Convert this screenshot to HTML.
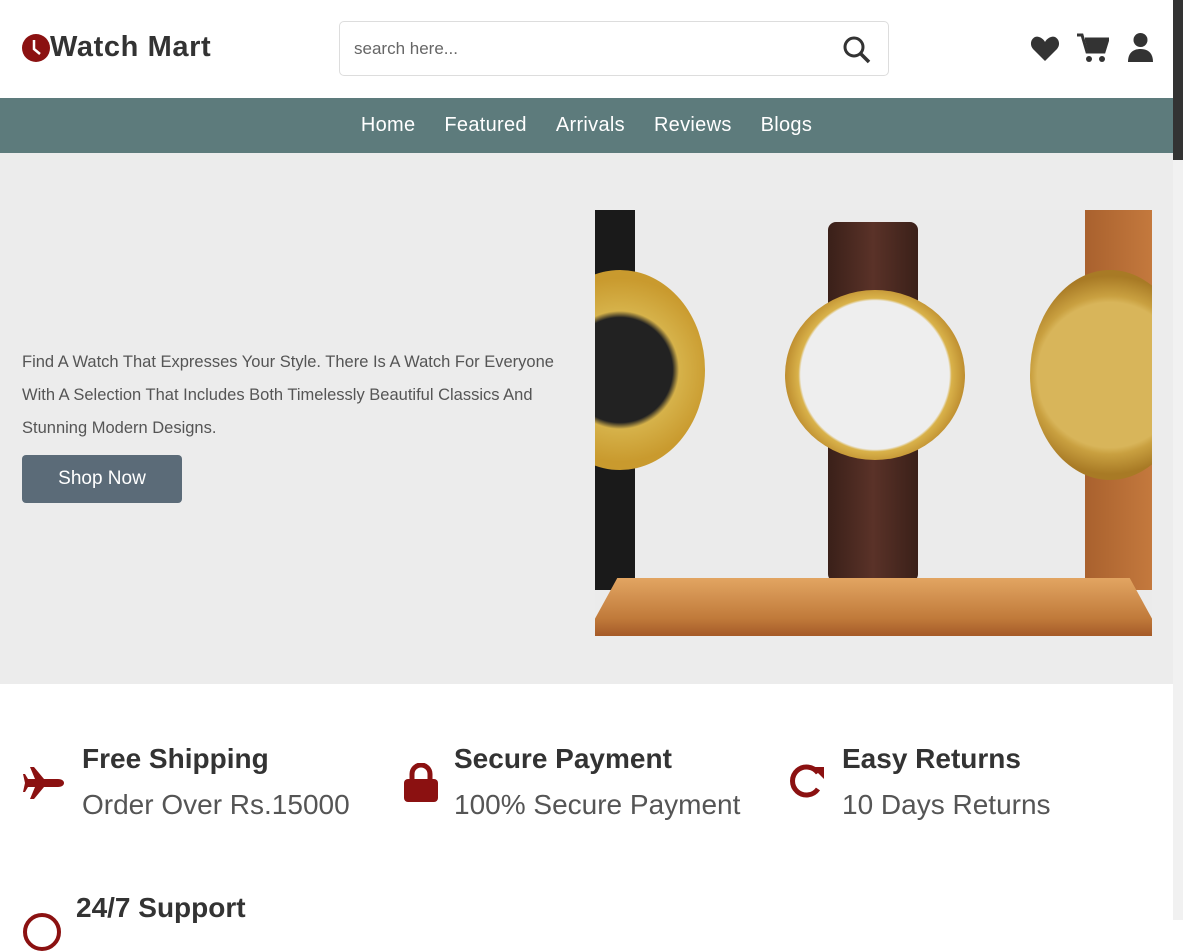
<!DOCTYPE html>
<html><head><meta charset="utf-8"><style>
*{margin:0;padding:0;box-sizing:border-box}
body{width:1183px;height:920px;overflow:hidden;font-family:"Liberation Sans",sans-serif;background:#fff;position:relative;color:#333}
.hdr{height:98px;position:relative}
.logo{position:absolute;left:22px;top:31px;font-size:29px;font-weight:bold;color:#333;display:flex;align-items:center;letter-spacing:0.6px}
.search{position:absolute;left:339px;top:21px;width:550px;height:55px;border:1px solid #ddd;border-radius:5px}
.search span{position:absolute;left:14px;top:17px;font-size:17px;color:#666}
.nav{position:absolute;top:98px;left:0;width:1173px;height:55px;background:#5d7b7c;display:flex;justify-content:center;gap:29px;padding-top:16px}
.nav a{color:#fff;font-size:20px;text-decoration:none;letter-spacing:0.3px}
.hero{position:absolute;top:153px;left:0;width:1173px;height:531px;background:#ececec}
.hero p{position:absolute;left:22px;top:193px;width:535px;font-size:16.5px;line-height:33px;color:#555}
.btn{position:absolute;left:22px;top:302px;width:160px;height:48px;background:#5b6b78;color:#fff;font-size:19px;border-radius:4px;text-align:center;line-height:48px}
.img{position:absolute;left:595px;top:57px;width:557px;height:426px;background:#ebebeb;overflow:hidden}
.wood{position:absolute;left:0;bottom:0;width:557px;height:58px;background:linear-gradient(180deg,#e2a562,#c07a3a 70%,#a55a28);clip-path:polygon(4% 0,96% 0,100% 70%,100% 100%,0 100%,0 70%)}
.sb{position:absolute;right:0;top:0;width:10px;height:920px;background:#f1f1f1}
.sb div{height:160px;background:#333;width:10px}
.feat{position:absolute;display:flex;gap:16px}
.feat h3{font-size:28px;color:#333;font-weight:bold}
.feat div.s{font-size:28px;color:#555;margin-top:14px}
</style></head><body>
<div class="hdr">
<div class="logo"><svg width="28" height="28" viewBox="0 0 28 28"><circle cx="14" cy="14" r="14" fill="#8b1111"/><path d="M12 6v9l6 5" stroke="#fff" stroke-width="2.5" fill="none"/></svg>Watch Mart</div>
<div class="search"><span>search here...</span><svg style="position:absolute;right:16px;top:13px" width="30" height="30" viewBox="0 0 30 30"><circle cx="12" cy="12" r="9" stroke="#333" stroke-width="3" fill="none"/><path d="M19 19l8 8" stroke="#333" stroke-width="3.5"/></svg></div>
<svg style="position:absolute;left:1030px;top:35px" width="30" height="27" viewBox="0 0 30 27"><path d="M15 26L3 14C-2 8 3 0 9 2c3 1 5 3 6 5 1-2 3-4 6-5 6-2 11 6 6 12z" fill="#333"/></svg>
<svg style="position:absolute;left:1077px;top:33px" width="32" height="30" viewBox="0 0 32 30"><path d="M0 2h5l5 17h17l4-13H8" fill="none" stroke="#333" stroke-width="3"/><path d="M8 7h22l-4 11H11z" fill="#333"/><circle cx="12" cy="26" r="3" fill="#333"/><circle cx="25" cy="26" r="3" fill="#333"/></svg>
<svg style="position:absolute;left:1128px;top:33px" width="25" height="29" viewBox="0 0 25 29"><circle cx="12.5" cy="7" r="7" fill="#333"/><path d="M0 29c0-9 5-13 12.5-13S25 20 25 29z" fill="#333"/></svg>
</div>
<div class="nav"><a>Home</a><a>Featured</a><a>Arrivals</a><a>Reviews</a><a>Blogs</a></div>
<div class="hero">
<p>Find A Watch That Expresses Your Style. There Is A Watch For Everyone With A Selection That Includes Both Timelessly Beautiful Classics And Stunning Modern Designs.</p>
<div class="btn">Shop Now</div>
<div class="img">
<div style="position:absolute;left:0;top:0;width:40px;height:380px;background:#1a1a1a"></div>
<div style="position:absolute;left:-60px;top:60px;width:170px;height:200px;border-radius:50%;background:radial-gradient(circle,#222 40%,#d6b24a 45%,#c99a2e 70%)"></div>
<div style="position:absolute;left:233px;top:12px;width:90px;height:360px;background:linear-gradient(90deg,#3a2019,#5a3228,#3a2019);border-radius:8px"></div>
<div style="position:absolute;left:190px;top:80px;width:180px;height:170px;border-radius:50%;background:radial-gradient(circle,#eee 60%,#d9b24a 62%,#b8862a 75%)"></div>
<div style="position:absolute;left:490px;top:0;width:70px;height:380px;background:linear-gradient(90deg,#a9612e,#c57a3e)"></div>
<div style="position:absolute;left:435px;top:60px;width:160px;height:210px;border-radius:50%;background:radial-gradient(circle,#d8b55a 55%,#c9a040 60%,#a87a25 75%)"></div>
<div class="wood"></div>
</div>
</div>
<div class="feat" style="left:22px;top:743px"><svg width="44" height="40" viewBox="0 0 44 40" style="margin-top:20px"><path d="M8 4h4l10 12h14c4 0 6 2 6 4s-2 4-6 4H22L12 36H8l5-12H6l-3 5H1l2-9-2-9h2l3 5h7z" fill="#8b1111"/></svg><div><h3>Free Shipping</h3><div class="s">Order Over Rs.15000</div></div></div>
<div class="feat" style="left:404px;top:743px"><svg width="34" height="40" viewBox="0 0 34 40" style="margin-top:20px"><path d="M8 16V11a9 9 0 0118 0v5" stroke="#8b1111" stroke-width="5" fill="none"/><rect x="0" y="16" width="34" height="23" rx="4" fill="#8b1111"/></svg><div><h3>Secure Payment</h3><div class="s">100% Secure Payment</div></div></div>
<div class="feat" style="left:788px;top:743px"><svg width="38" height="38" viewBox="0 0 38 38" style="margin-top:20px"><path d="M30 26A14 14 0 1130 10" stroke="#8b1111" stroke-width="5" fill="none"/><path d="M24 4h12v12z" fill="#8b1111"/></svg><div><h3>Easy Returns</h3><div class="s">10 Days Returns</div></div></div>
<div class="feat" style="left:22px;top:892px;gap:14px"><svg width="40" height="40" viewBox="0 0 40 40" style="margin-top:20px"><circle cx="20" cy="20" r="17" stroke="#8b1111" stroke-width="4" fill="none"/></svg><div><h3>24/7 Support</h3></div></div>
<div class="sb"><div></div></div>
</body></html>
